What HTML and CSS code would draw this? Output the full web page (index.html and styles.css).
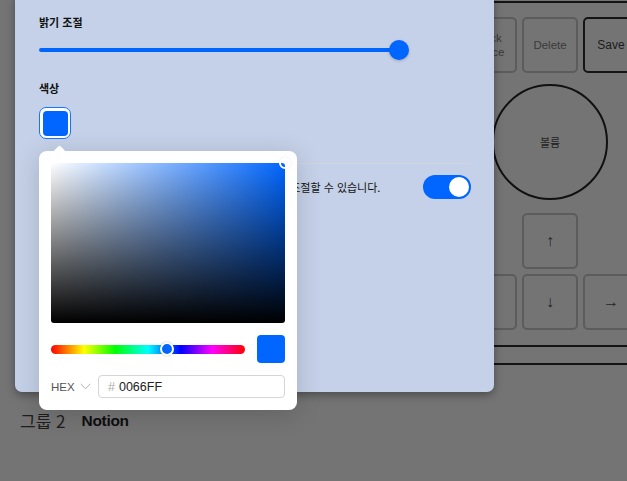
FILE: index.html
```html
<!DOCTYPE html>
<html lang="ko">
<head>
<meta charset="utf-8">
<title>밝기 조절</title>
<link rel="stylesheet" href="styles.css">
</head>
<body>
<div class="page">
  <div class="kb">
    <div class="rule"></div>
    <div class="kb-row r1">
      <div class="key dim small">Back<br>space</div>
      <div class="key dim">Delete</div>
      <div class="key strong">Save</div>
    </div>
    <div class="kb-row r2"><div class="knob">볼륨</div></div>
    <div class="kb-row r3"><div class="key ghost"></div><div class="key arrow">↑</div></div>
    <div class="kb-row r4"><div class="key arrow">←</div><div class="key arrow">↓</div><div class="key arrow">→</div></div>
    <div class="rule r5"></div>
    <div class="rule r6"></div>
  </div>
  <div class="title"><span class="group">그룹 2</span><span class="app">Notion</span></div>
</div>

<div class="panel">
  <h3 class="label">밝기 조절</h3>
  <div class="slider">
    <div class="slider-track"></div>
    <div class="slider-thumb"></div>
  </div>
  <h3 class="label color-label">색상</h3>
  <div class="swatch"><div class="swatch-fill"></div></div>
  <div class="divider"></div>
  <div class="option">
    <span class="option-text">디스플레이의 밝기와 색상을 환경에 맞추어서 자동으로 조절할 수 있습니다.</span>
    <div class="toggle"><div class="toggle-knob"></div></div>
  </div>

  <div class="popover">
    <div class="sat"><div class="sat-handle"></div></div>
    <div class="hue-row">
      <div class="hue"><div class="hue-thumb" style="left:59.8%"></div></div>
      <div class="preview"></div>
    </div>
    <div class="hex-row">
      <div class="hex-mode">HEX
        <svg class="chev" width="11" height="7" viewBox="0 0 11 7"><path d="M0.8 0.8 L5.5 5.8 L10.2 0.8" fill="none" stroke="#b5b5b5" stroke-width="1"/></svg>
      </div>
      <div class="hex-input"><span class="hash">#</span><span>0066FF</span></div>
    </div>
  </div>
</div>
</body>
</html>
```

FILE: styles.css
```css
html, body {
  margin: 0;
  padding: 0;
}
body {
  width: 627px;
  height: 481px;
  overflow: hidden;
  position: relative;
  background: #747474;
  font-family: "Liberation Sans", "Noto Sans CJK KR", sans-serif;
}

/* background page (dimmed) */
.page {
  height: 481px;
  overflow: hidden;
}
.kb {
  margin-left: 461px;
  padding-top: 1px;
  width: 300px;
}
.rule {
  height: 0;
  border-top: 2px solid #141414;
}
.kb-row {
  display: flex;
  gap: 5px;
}
.r1 { margin-top: 14px; }
.r2 { margin-top: 11px; }
.r3 { margin-top: 13px; }
.r4 { margin-top: 5px; }
.r5 { margin-top: 15px; }
.r6 { margin-top: 16px; }
.key {
  width: 56px;
  height: 56px;
  flex: none;
  box-sizing: border-box;
  border: 2px solid #5c5c5c;
  border-radius: 5px;
  display: flex;
  align-items: center;
  justify-content: center;
  text-align: center;
  font-size: 11.5px;
  line-height: 14px;
  color: #2a2a2a;
}
.key.dim { color: #3a3a3a; }
.key.strong {
  border: 2px solid #151515;
  color: #1c1c1c;
  font-size: 12px;
}
.key.ghost { visibility: hidden; }
.key.arrow {
  font-family: "Liberation Sans", sans-serif;
  font-size: 16px;
  color: #262626;
}
.knob {
  margin-left: 31px;
  width: 116px;
  height: 116px;
  box-sizing: border-box;
  border: 2px solid #111;
  border-radius: 50%;
  display: flex;
  align-items: center;
  justify-content: center;
  font-family: "Noto Sans CJK KR", sans-serif;
  font-size: 11px;
  color: #222;
}
.title {
  margin-top: 46px;
  padding-left: 20px;
  display: flex;
  gap: 16px;
  font-size: 16px;
  line-height: 20px;
}
.group {
  color: #1e1e1e;
  font-family: "Noto Sans CJK KR", sans-serif;
  font-weight: 400;
  font-size: 17px;
}
.app {
  font-weight: 700;
  color: #0e0e0e;
  font-size: 15.5px;
  letter-spacing: -0.3px;
}

/* modal panel */
.panel {
  position: absolute;
  left: 15px;
  top: -8px;
  width: 479px;
  height: 400px;
  box-sizing: border-box;
  padding: 22px 23px 0 24px;
  background: #c5d1e8;
  border-radius: 7px;
  box-shadow: 0 3px 9px rgba(0, 0, 0, 0.35);
  font-family: "Noto Sans CJK KR", sans-serif;
}
.label {
  margin: 0;
  font-size: 11px;
  line-height: 16px;
  font-weight: 700;
  color: #111;
}
.color-label { margin-top: 20px; }
.slider {
  margin-top: 10px;
  width: 370px;
  height: 20px;
  display: flex;
  align-items: center;
}
.slider-track {
  flex: 1;
  height: 4px;
  border-radius: 2px;
  background: #0066ff;
}
.slider-thumb {
  width: 20px;
  height: 20px;
  margin-left: -10px;
  border-radius: 50%;
  background: #0066ff;
  box-shadow: 0 1px 3px rgba(0, 0, 0, 0.22);
}
.swatch {
  margin-top: 11px;
  width: 32px;
  height: 32px;
  box-sizing: border-box;
  border: 1.5px solid #1a73ff;
  border-radius: 7px;
  padding: 2.5px;
  background: #fff;
}
.swatch-fill {
  width: 100%;
  height: 100%;
  border-radius: 4px;
  background: #0066ff;
}
.divider {
  margin-top: 24px;
  height: 1px;
  background: #d1d4db;
}
.option {
  margin-top: 11px;
  height: 24px;
  display: flex;
  align-items: center;
  justify-content: space-between;
}
.option-text {
  font-size: 11px;
  color: #111;
  white-space: nowrap;
}
.toggle {
  width: 48px;
  height: 24px;
  box-sizing: border-box;
  padding: 0 2px;
  border-radius: 12px;
  background: #0066ff;
  display: flex;
  align-items: center;
  justify-content: flex-end;
}
.toggle-knob {
  width: 20px;
  height: 20px;
  border-radius: 50%;
  background: #fff;
}

/* color picker popover */
.popover {
  position: absolute;
  left: 24px;
  top: 159px;
  width: 258px;
  box-sizing: border-box;
  padding: 12px;
  background: #fff;
  border-radius: 8px;
  box-shadow: 0 4px 26px rgba(0, 0, 0, 0.16);
  display: flex;
  flex-direction: column;
  gap: 12px;
  font-family: "Liberation Sans", sans-serif;
}
.popover::before {
  content: "";
  position: absolute;
  left: 15.5px;
  top: -4.5px;
  width: 9px;
  height: 9px;
  background: #fff;
  border-radius: 1.5px;
  transform: rotate(45deg);
}
.sat {
  position: relative;
  height: 160px;
  border-radius: 3px;
  background:
    linear-gradient(to top, #000, rgba(0, 0, 0, 0)),
    linear-gradient(to right, #fff, #0066ff);
}
.sat-handle {
  position: absolute;
  right: -6px;
  top: -6px;
  width: 12px;
  height: 12px;
  box-sizing: border-box;
  border: 2px solid #fff;
  border-radius: 50%;
  box-shadow: 0 0 1px rgba(0, 0, 0, 0.25);
}
.hue-row {
  display: flex;
  align-items: center;
  gap: 12px;
}
.hue {
  position: relative;
  flex: 1;
  height: 9px;
  border-radius: 5px;
  background: linear-gradient(to right, #f00, #ff0 17%, #0f0 33%, #0ff 50%, #00f 67%, #f0f 83%, #f00);
}
.hue-thumb {
  position: absolute;
  top: 50%;
  width: 14px;
  height: 14px;
  margin: -7px 0 0 -7px;
  box-sizing: border-box;
  border: 2.5px solid #fff;
  border-radius: 50%;
  background: #0066ff;
  box-shadow: 0 0 1.5px rgba(0, 0, 0, 0.35);
}
.preview {
  width: 28px;
  height: 28px;
  border-radius: 4px;
  background: #0066ff;
}
.hex-row {
  height: 23px;
  display: flex;
  align-items: center;
}
.hex-mode {
  display: flex;
  align-items: center;
  gap: 5px;
  font-size: 11.5px;
  color: #555;
}
.chev { display: block; }
.hex-input {
  margin-left: auto;
  width: 187px;
  height: 23px;
  box-sizing: border-box;
  padding-left: 9px;
  border: 1px solid #d5d5d5;
  border-radius: 4px;
  display: flex;
  align-items: center;
  gap: 4px;
  font-size: 12.5px;
  color: #222;
}
.hash { color: #aaa; }
```
